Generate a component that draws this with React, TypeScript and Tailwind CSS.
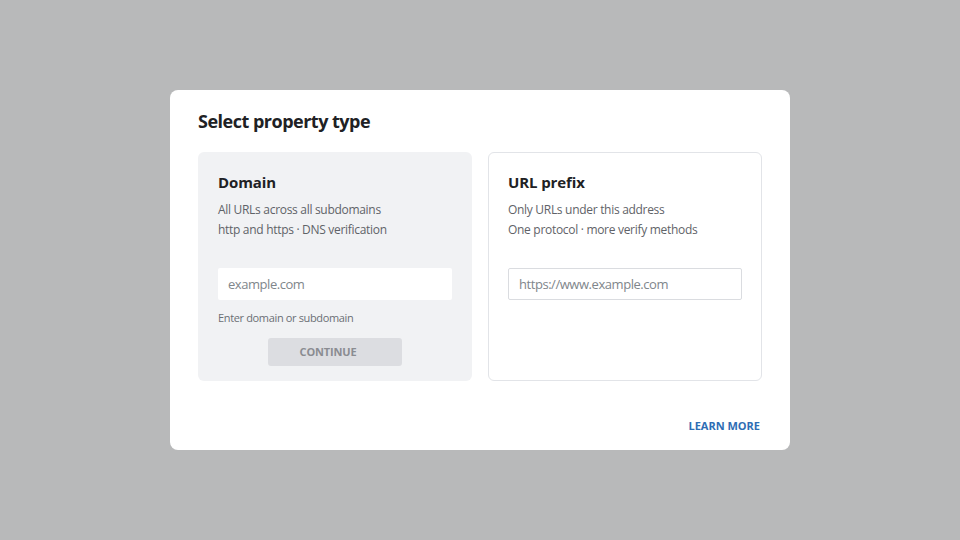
import React from "react";

export default function App() {
  return (
    <div
      className="w-[960px] h-[540px] bg-[#b8b9ba] flex items-center justify-center"
      style={{ fontFamily: '"Open Sans", "Noto Sans", sans-serif' }}
    >
      <div className="w-[620px] h-[360px] bg-white rounded-[8px] px-[28px] pt-[19px] pb-[16px] flex flex-col">
        <h1 className="text-[18px] leading-[24px] font-bold text-[#202124] tracking-[-0.5px]">Select property type</h1>
        <div className="grid grid-cols-2 gap-4 mt-[19px]">
          <div className="bg-[#f1f2f4] rounded-[6px] px-[20px] pt-[19px] pb-[15px] flex flex-col">
            <h2 className="text-[15px] leading-[22px] font-bold text-[#202124] tracking-[-0.1px]">Domain</h2>
            <p className="mt-[7px] text-[12px] leading-[20px] text-[#5f6368] tracking-[-0.3px]">
              All URLs across all subdomains
              <br />
              http and https · DNS verification
            </p>
            <input
              className="mt-[28px] h-[32px] w-full bg-white px-[10px] text-[13px] tracking-[-0.45px] text-[#202124] placeholder:text-[#80868b] outline-none rounded-[2px]"
              placeholder="example.com"
            />
            <p className="mt-[10px] text-[11px] leading-[16px] text-[#6b6f74] tracking-[-0.35px]">Enter domain or subdomain</p>
            <div className="mt-[12px] flex justify-center">
              <button className="w-[134px] h-[28px] rounded-[3px] bg-[#dcdde1] text-[11px] font-bold text-[#8a8c91] tracking-[-0.15px] pr-[14px]">
                CONTINUE
              </button>
            </div>
          </div>
          <div className="bg-white border border-[#e2e4e8] rounded-[6px] px-[19px] pt-[18px] pb-[15px] flex flex-col">
            <h2 className="text-[15px] leading-[22px] font-bold text-[#202124] tracking-[-0.1px]">URL prefix</h2>
            <p className="mt-[7px] text-[12px] leading-[20px] text-[#5f6368] tracking-[-0.3px]">
              Only URLs under this address
              <br />
              One protocol · more verify methods
            </p>
            <input
              className="mt-[28px] h-[32px] w-full bg-white border border-[#dadce0] px-[10px] text-[13px] tracking-[-0.45px] text-[#202124] placeholder:text-[#80868b] outline-none rounded-[2px]"
              placeholder="https://www.example.com"
            />
          </div>
        </div>
        <div className="mt-auto flex justify-end">
          <button className="text-[11px] leading-[16px] font-bold text-[#2e6db4] mr-[2px]">LEARN MORE</button>
        </div>
      </div>
    </div>
  );
}
